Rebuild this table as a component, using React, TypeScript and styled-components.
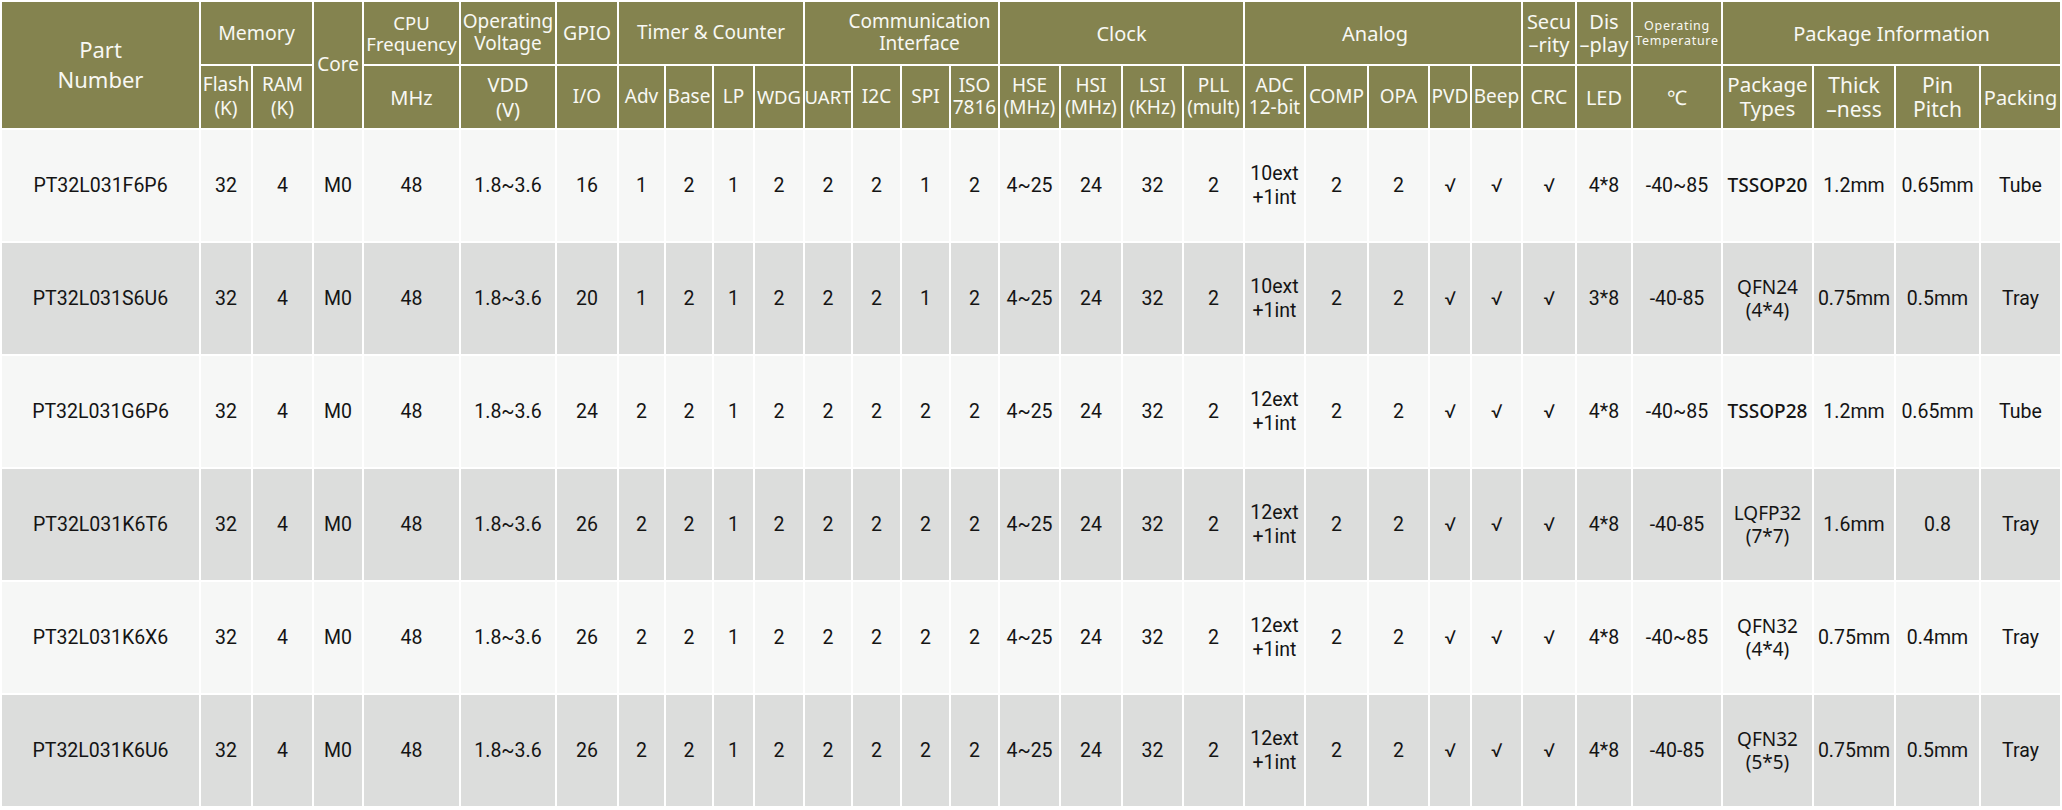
import React from "react";
import styled, { createGlobalStyle } from "styled-components";

const GlobalStyle = createGlobalStyle`
  html, body {
    margin: 0;
    padding: 0;
    background: #fff;
  }
  body {
    font-family: Roboto, "Noto Sans", sans-serif;
  }
`;

// column widths (content box), 2px white rules between them
const COLS = [
  197, 50, 59, 48, 95, 94, 60, 45, 46, 39, 48, 46, 47, 47, 47, 59, 60, 59, 59,
  59, 61, 59, 40, 49, 52, 54, 88, 89, 80, 83, 79,
];

const Sheet = styled.div`
  display: grid;
  grid-template-columns: ${COLS.map((c) => `${c}px`).join(" ")};
  grid-template-rows: 62px 62px repeat(6, 111px);
  gap: 2px;
  padding: 2px;
  width: 2062px;
  box-sizing: border-box;
  background: #ffffff;
`;

const Head = styled.div<{
  $span?: number;
  $rows?: number;
  $size?: number;
  $lh?: number;
  $ls?: number;
  $shift?: number;
}>`
  grid-column: span ${(p) => p.$span || 1};
  grid-row: span ${(p) => p.$rows || 1};
  display: flex;
  align-items: center;
  justify-content: center;
  text-align: center;
  white-space: pre-line;
  padding-left: ${(p) => Math.max(p.$shift || 0, 0)}px;
  padding-right: ${(p) => Math.max(-(p.$shift || 0), 0)}px;
  background: #84834f;
  color: #f8f8f3;
  font-family: "Noto Sans", Roboto, sans-serif;
  font-size: ${(p) => p.$size || 19}px;
  line-height: ${(p) => p.$lh || 1.25};
  letter-spacing: ${(p) => p.$ls || 0}px;
`;

const Cell = styled.div<{ $alt: boolean; $pkg?: boolean; $strong?: boolean }>`
  display: flex;
  align-items: center;
  justify-content: center;
  text-align: center;
  white-space: pre-line;
  background: ${(p) => (p.$alt ? "#dcdddc" : "#f6f7f6")};
  color: #141414;
  font-family: ${(p) => (p.$pkg ? `"Noto Sans", Roboto` : "Roboto")}, sans-serif;
  font-size: ${(p) => (p.$pkg ? 19 : 19.5)}px;
  font-weight: ${(p) => (p.$strong ? 500 : 400)};
  line-height: 1.2;
`;

type HeadDef = {
  t: string;
  span?: number;
  rows?: number;
  size?: number;
  lh?: number;
  ls?: number;
  shift?: number;
};

const HEADS: HeadDef[] = [
  { t: "Part\nNumber", rows: 2, size: 22, lh: 1.35 },
  { t: "Memory", size: 19.5, span: 2 },
  { t: "Core", rows: 2 },
  { t: "CPU\nFrequency", size: 18.5, lh: 1.15 },
  { t: "Operating\nVoltage", size: 19, lh: 1.15 },
  { t: "GPIO", size: 19.5 },
  { t: "Timer & Counter", span: 4 },
  { t: "Communication\nInterface", span: 4, lh: 1.15, shift: 36 },
  { t: "Clock", span: 4, size: 20 },
  { t: "Analog", span: 5, size: 20, shift: -16 },
  { t: "Secu\n–rity", size: 20, lh: 1.15 },
  { t: "Dis\n–play", size: 20, lh: 1.15 },
  { t: "Operating\nTemperature", size: 12.5, lh: 1.2, ls: 0.7 },
  { t: "Package Information", span: 4, size: 20 },
  { t: "Flash\n(K)" },
  { t: "RAM\n(K)" },
  { t: "MHz", size: 20 },
  { t: "VDD\n(V)", size: 20 },
  { t: "I/O" },
  { t: "Adv" },
  { t: "Base" },
  { t: "LP" },
  { t: "WDG", size: 18.5 },
  { t: "UART", size: 18.5 },
  { t: "I2C" },
  { t: "SPI" },
  { t: "ISO\n7816", lh: 1.15 },
  { t: "HSE\n(MHz)", lh: 1.15 },
  { t: "HSI\n(MHz)", lh: 1.15 },
  { t: "LSI\n(KHz)", lh: 1.15 },
  { t: "PLL\n(mult)", lh: 1.15 },
  { t: "ADC\n12-bit", lh: 1.15 },
  { t: "COMP" },
  { t: "OPA" },
  { t: "PVD" },
  { t: "Beep" },
  { t: "CRC", size: 19.5 },
  { t: "LED", size: 20 },
  { t: "℃", size: 20 },
  { t: "Package\nTypes", size: 20.5, lh: 1.15 },
  { t: "Thick\n–ness", size: 21, lh: 1.15 },
  { t: "Pin\nPitch", size: 21, lh: 1.15 },
  { t: "Packing", size: 20 },
];

const common = (gpio: string, t: string[], c: string[], adc: string) => [
  "32", "4", "M0", "48", "1.8~3.6", gpio,
  ...t, ...c,
  "4~25", "24", "32", "2", adc, "2", "2", "√", "√", "√",
];

const ROWS: string[][] = [
  [
    "PT32L031F6P6",
    ...common("16", ["1", "2", "1", "2"], ["2", "2", "1", "2"], "10ext\n+1int"),
    "4*8", "-40~85", "TSSOP20", "1.2mm", "0.65mm", "Tube",
  ],
  [
    "PT32L031S6U6",
    ...common("20", ["1", "2", "1", "2"], ["2", "2", "1", "2"], "10ext\n+1int"),
    "3*8", "-40-85", "QFN24\n(4*4)", "0.75mm", "0.5mm", "Tray",
  ],
  [
    "PT32L031G6P6",
    ...common("24", ["2", "2", "1", "2"], ["2", "2", "2", "2"], "12ext\n+1int"),
    "4*8", "-40~85", "TSSOP28", "1.2mm", "0.65mm", "Tube",
  ],
  [
    "PT32L031K6T6",
    ...common("26", ["2", "2", "1", "2"], ["2", "2", "2", "2"], "12ext\n+1int"),
    "4*8", "-40-85", "LQFP32\n(7*7)", "1.6mm", "0.8", "Tray",
  ],
  [
    "PT32L031K6X6",
    ...common("26", ["2", "2", "1", "2"], ["2", "2", "2", "2"], "12ext\n+1int"),
    "4*8", "-40~85", "QFN32\n(4*4)", "0.75mm", "0.4mm", "Tray",
  ],
  [
    "PT32L031K6U6",
    ...common("26", ["2", "2", "1", "2"], ["2", "2", "2", "2"], "12ext\n+1int"),
    "4*8", "-40-85", "QFN32\n(5*5)", "0.75mm", "0.5mm", "Tray",
  ],
];

export default function App() {
  return (
    <>
      <GlobalStyle />
      <Sheet>
        {HEADS.map((h, i) => (
          <Head
            key={`h${i}`}
            $span={h.span}
            $rows={h.rows}
            $size={h.size}
            $lh={h.lh}
            $ls={h.ls}
            $shift={h.shift}
          >
            {h.t}
          </Head>
        ))}
        {ROWS.map((row, r) =>
          row.map((v, c) => (
            <Cell
              key={`${r}-${c}`}
              $alt={r % 2 === 1}
              $pkg={c === 27}
              $strong={c === 27 && !v.includes("\n")}
            >
              {v}
            </Cell>
          ))
        )}
      </Sheet>
    </>
  );
}
